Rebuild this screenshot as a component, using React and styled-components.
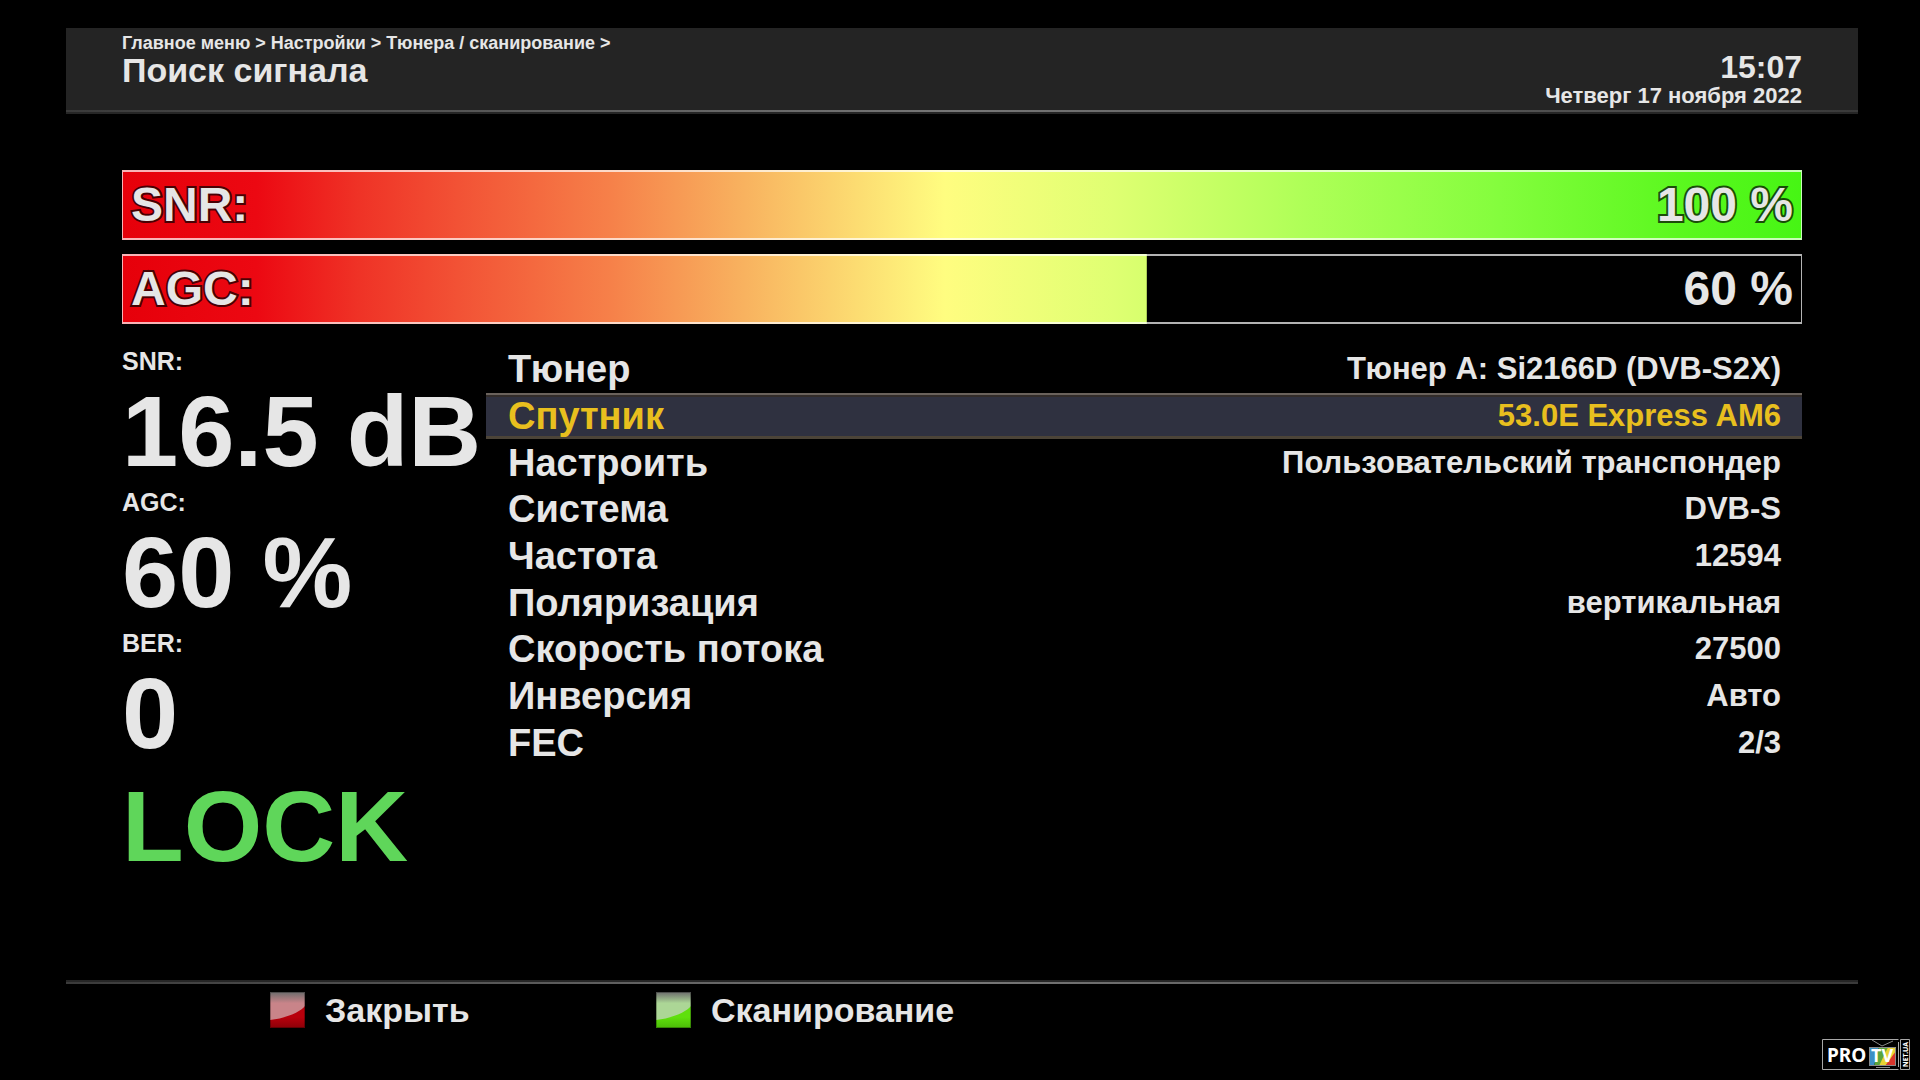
import React from "react";
import styled, { createGlobalStyle } from "styled-components";

const readings = [
    { id: "snr", label: "SNR:", value: "16.5 dB" },
    { id: "agc", label: "AGC:", value: "60 %" },
    { id: "ber", label: "BER:", value: "0" }
];

const settings = [
    { label: "Тюнер", value: "Тюнер A: Si2166D (DVB-S2X)" },
    { label: "Спутник", value: "53.0E Express AM6", selected: true },
    { label: "Настроить", value: "Пользовательский транспондер" },
    { label: "Система", value: "DVB-S" },
    { label: "Частота", value: "12594" },
    { label: "Поляризация", value: "вертикальная" },
    { label: "Скорость потока", value: "27500" },
    { label: "Инверсия", value: "Авто" },
    { label: "FEC", value: "2/3" }
];

const SignalBar = ({ label, text, fill }) => (
    <Bar>
        <BarFill style={{ clipPath: `inset(0 ${100 - fill}% 0 0)` }} />
        <BarText>{label}</BarText>
        <BarText>{text}</BarText>
    </Bar>
);

const KeyIcon = ({ id, base, edge, light }) => (
    <svg width="35" height="36" viewBox="0 0 35 36" aria-hidden="true">
        <defs>
            <linearGradient id={id + "Gloss"} x1="0" y1="0" x2="0" y2="1">
                <stop offset="0" stopColor="#6c6c6c" />
                <stop offset="0.4" stopColor={light} />
                <stop offset="1" stopColor={light} />
            </linearGradient>
            <linearGradient id={id + "Base"} x1="0" y1="0" x2="0" y2="1">
                <stop offset="0.7" stopColor={base} />
                <stop offset="1" stopColor={edge} />
            </linearGradient>
        </defs>
        <rect width="35" height="36" fill={`url(#${id}Base)`} />
        <path d="M0 0H35V14C30 20 17 26 0 28Z" fill={`url(#${id}Gloss)`} />
        <rect x="0.5" y="0.5" width="34" height="35" fill="none" stroke="#000" strokeOpacity="0.3" />
    </svg>
);

const ProTvLogo = () => (
    <svg width="88" height="31" viewBox="0 0 88 31" role="img" aria-label="PRO TV NET.UA">
        <path d="M76.5 0.5H0.5V30.5H76.5M76.5 3V28M78.5 0.5H87.5V30.5H78.5Z" fill="#000" stroke="#a8a8a8" />
        <text x="5" y="23" fontFamily="Noto Sans, sans-serif" fontWeight="700" fontSize="19" fill="#fff">PRO</text>
        <path d="M50 1L60 7L71 2" stroke="#8a8a8a" fill="none" />
        <path d="M47 8H57L52 27H47Z" fill="#3c8fc4" />
        <path d="M57 8H66L60 27H52Z" fill="#5aa53c" />
        <path d="M66 8H74V14L64 27H57Z" fill="#e8d332" />
        <path d="M74 12V27H63Z" fill="#d8352c" />
        <path d="M47.5 8.5H73.5V26.5H47.5Z" fill="none" stroke="#8a8a8a" />
        <path d="M54 28.5H68" stroke="#8a8a8a" />
        <text x="49" y="23" fontFamily="Noto Sans, sans-serif" fontWeight="700" fontSize="18" fill="#fff">TV</text>
        <text x="-28" y="86" transform="rotate(-90)" fontFamily="Noto Sans, sans-serif" fontWeight="700" fontSize="7" fill="#fff">NET.UA</text>
    </svg>
);

class App extends React.Component {
    render() {
        return (
            <Screen>
                <GlobalStyle />
                <Header>
                    <div>
                        <Breadcrumbs>Главное меню &gt; Настройки &gt; Тюнера / сканирование &gt;</Breadcrumbs>
                        <Title>Поиск сигнала</Title>
                    </div>
                    <Clock>
                        <Time>15:07</Time>
                        <DateText>Четверг 17 ноября 2022</DateText>
                    </Clock>
                </Header>
                <Rule />
                <Bars>
                    <SignalBar label="SNR:" text="100 %" fill={100} />
                    <SignalBar label="AGC:" text="60 %" fill={61} />
                </Bars>
                <Content>
                    <Readings>
                        {readings.map((item) => (
                            <Reading key={item.id}>
                                <ReadingLabel>{item.label}</ReadingLabel>
                                <ReadingValue>{item.value}</ReadingValue>
                            </Reading>
                        ))}
                        <Lock>LOCK</Lock>
                    </Readings>
                    <Settings>
                        <tbody>
                            {settings.map((item) => (
                                <SettingRow key={item.label} $selected={item.selected}>
                                    <SettingLabel scope="row">{item.label}</SettingLabel>
                                    <SettingValue>{item.value}</SettingValue>
                                </SettingRow>
                            ))}
                        </tbody>
                    </Settings>
                </Content>
                <Rule $flip />
                <Footer>
                    <Keys>
                        <Key type="button">
                            <KeyIcon id="redKey" base="#b8000c" edge="#8c0008" light="#c98489" />
                            Закрыть
                        </Key>
                        <Key type="button">
                            <KeyIcon id="greenKey" base="#5fe00c" edge="#4cbc08" light="#acd696" />
                            Сканирование
                        </Key>
                    </Keys>
                    <ProTvLogo />
                </Footer>
            </Screen>
        );
    }
}

const GlobalStyle = createGlobalStyle`
    * {
        box-sizing: border-box;
    }

    body {
        margin: 0;
        background: #000;
    }
`;

const Screen = styled.main`
    display: flex;
    flex-direction: column;
    min-height: 100vh;
    padding-top: 28px;
    overflow: hidden;
    background: #000;
    color: #e6e6e6;
    font-family: "Liberation Sans", Arial, sans-serif;
    font-weight: bold;
    white-space: nowrap;
`;

const Header = styled.header`
    display: flex;
    justify-content: space-between;
    height: 82px;
    margin: 0 62px 0 66px;
    padding: 0 56px;
    background: #242424;
`;

const Rule = styled.div`
    height: 4px;
    margin: 0 62px 0 66px;
    background:
        linear-gradient(90deg, #3a3a3a, #777 50%, #3a3a3a) 0 ${(props) => (props.$flip ? "100%" : "0")} / 100% 2px no-repeat,
        #262626;
`;

const Breadcrumbs = styled.nav`
    padding-top: 4px;
    font-size: 18px;
    line-height: 22px;
`;

const Title = styled.h1`
    margin: 0;
    font-size: 34px;
    line-height: 32px;
`;

const Clock = styled.div`
    padding-top: 22px;
    text-align: right;
`;

const Time = styled.div`
    font-size: 32px;
    line-height: 34px;
`;

const DateText = styled.div`
    font-size: 22px;
    line-height: 24px;
`;

const Bars = styled.section`
    display: grid;
    gap: 14px;
    margin: 56px 118px 0 122px;
`;

const Bar = styled.div`
    position: relative;
    display: flex;
    justify-content: space-between;
    align-items: center;
    height: 70px;
    padding: 0 9px;

    &::after {
        content: "";
        position: absolute;
        inset: 0;
        border: solid rgba(255, 255, 255, 0.7);
        border-width: 2px 1px;
    }
`;

const BarFill = styled.div`
    position: absolute;
    inset: 0;
    background: linear-gradient(
        90deg,
        #e6000a 0%,
        #ec0812 8%,
        #ef3226 14%,
        #f25235 20%,
        #f68049 29%,
        #f8b25f 37%,
        #fffd80 49%,
        #dfff72 59%,
        #b0ff58 70%,
        #84fd3d 82%,
        #5af81e 93%,
        #46f514 100%
    );
`;

const BarText = styled.span`
    position: relative;
    font-size: 48px;
    line-height: 60px;
    paint-order: stroke;
    -webkit-text-stroke: 4px rgba(0, 0, 0, 0.7);
`;

const Content = styled.section`
    display: flex;
    flex: 1;
    align-items: flex-start;
    margin: 22px 118px 0 122px;
`;

const Readings = styled.div`
    flex: 0 0 364px;
`;

const Reading = styled.div`
    height: 141px;
`;

const ReadingLabel = styled.div`
    font-size: 25px;
    line-height: 30px;
`;

const ReadingValue = styled.div`
    font-size: 101px;
    line-height: 110px;
`;

const Lock = styled(ReadingValue)`
    color: #5fd65a;
    line-height: 114px;
`;

const Settings = styled.table`
    flex: 1;
    height: 420px;
    border-collapse: collapse;
`;

const SettingRow = styled.tr`
    color: ${(props) => (props.$selected ? "#e8bf1e" : "inherit")};
    background: ${(props) => (props.$selected ? "linear-gradient(#6a625c 2px, #322c2a 2px 4px, #2f3140 4px calc(100% - 4px), #4c4438 calc(100% - 4px))" : "none")};
`;

const SettingLabel = styled.th`
    padding: 0 0 0 22px;
    font-size: 38px;
    line-height: 40px;
    text-align: left;
`;

const SettingValue = styled.td`
    padding: 0 21px 0 0;
    font-size: 31px;
    line-height: 40px;
    text-align: right;
`;

const Footer = styled.footer`
    display: flex;
    align-items: flex-end;
    justify-content: space-between;
    height: 96px;
    padding: 0 10px 10px 270px;
`;

const Keys = styled.div`
    display: flex;
    align-self: flex-start;
    padding-top: 8px;
`;

const Key = styled.button`
    display: flex;
    align-items: center;
    gap: 20px;
    width: 386px;
    height: 36px;
    padding: 0;
    border: 0;
    background: none;
    color: inherit;
    font: inherit;
    font-size: 34px;
`;

export default App;
